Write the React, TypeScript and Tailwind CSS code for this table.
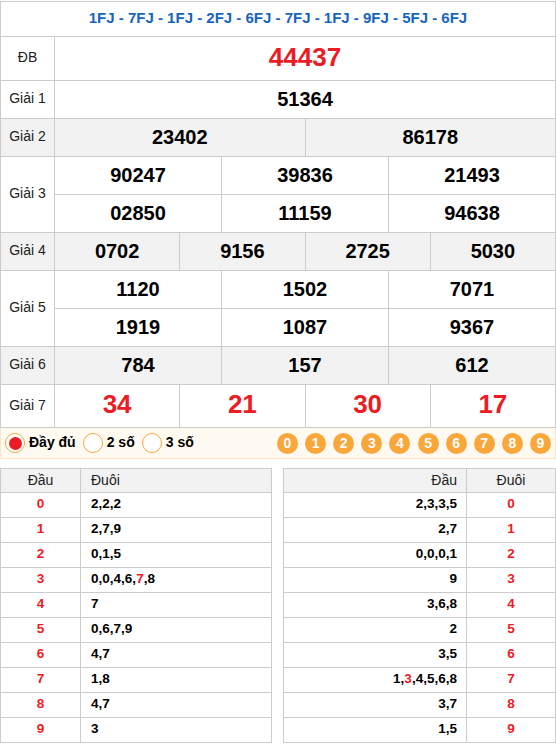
import React from "react";

const red = "text-[#ed1c24]";

const Label = ({ text, gray }: { text: string; gray?: boolean }) => (
  <div
    className={`w-[54px] shrink-0 border-r border-[#ccc] flex items-center justify-center pb-[2px] text-[14px] text-[#222] ${
      gray ? "bg-[#f2f2f2]" : ""
    }`}
  >
    {text}
  </div>
);

const Cells = ({ nums, border }: { nums: string[]; border?: boolean }) => (
  <div className={`flex ${border ? "border-b border-[#ccc]" : ""}`}>
    {nums.map((n, i) => (
      <div
        key={i}
        className={`flex-1 h-[37px] flex items-center justify-center pb-[2px] font-bold text-[20px] text-black ${
          i > 0 ? "border-l border-[#ccc]" : ""
        }`}
      >
        {n}
      </div>
    ))}
  </div>
);

const Row = ({ label, rows, gray }: { label: string; rows: string[][]; gray?: boolean }) => (
  <div className={`flex border-b border-[#ccc] ${gray ? "bg-[#f2f2f2]" : ""}`}>
    <Label text={label} gray={gray} />
    <div className="flex-1 flex flex-col">
      {rows.map((r, i) => (
        <Cells key={i} nums={r} border={i < rows.length - 1} />
      ))}
    </div>
  </div>
);

const dau = [
  ["0", "2,2,2"],
  ["1", "2,7,9"],
  ["2", "0,1,5"],
  ["3", "0,0,4,6,*7,8"],
  ["4", "7"],
  ["5", "0,6,7,9"],
  ["6", "4,7"],
  ["7", "1,8"],
  ["8", "4,7"],
  ["9", "3"],
];

const duoi = [
  ["2,3,3,5", "0"],
  ["2,7", "1"],
  ["0,0,0,1", "2"],
  ["9", "3"],
  ["3,6,8", "4"],
  ["2", "5"],
  ["3,5", "6"],
  ["1,*3,4,5,6,8", "7"],
  ["3,7", "8"],
  ["1,5", "9"],
];

// "*" marks a digit shown in red
const Loto = ({ s }: { s: string }) => (
  <>
    {s.split(",").map((p, i) => (
      <React.Fragment key={i}>
        {i > 0 && ","}
        {p.startsWith("*") ? <span className={red}>{p.slice(1)}</span> : p}
      </React.Fragment>
    ))}
  </>
);

const Radio = ({ checked, text }: { checked?: boolean; text: string }) => (
  <div className="flex items-center gap-[4px]">
    <div className="w-[20px] h-[20px] rounded-full border border-[#f9a63a] bg-white flex items-center justify-center">
      {checked && <div className="w-[13px] h-[13px] rounded-full bg-[#ed1c24]" />}
    </div>
    <span className="font-bold text-[14px] text-black pb-px">{text}</span>
  </div>
);

export default function App() {
  return (
    <div className="w-[556px] bg-white font-['Liberation_Sans',Arial,sans-serif]">
      <div className="mt-px border border-[#ccc]">
        <div className="h-[35px] border-b border-[#ccc] flex items-center justify-center pb-px font-bold text-[15px] text-[#1565c0]">
          1FJ - 7FJ - 1FJ - 2FJ - 6FJ - 7FJ - 1FJ - 9FJ - 5FJ - 6FJ
        </div>
        <div className="flex border-b border-[#ccc]">
          <Label text="ĐB" />
          <div className={`flex-1 h-[43px] flex items-center justify-center pb-[2px] font-bold text-[26px] ${red}`}>
            44437
          </div>
        </div>
        <Row label="Giải 1" rows={[["51364"]]} />
        <Row label="Giải 2" gray rows={[["23402", "86178"]]} />
        <Row
          label="Giải 3"
          rows={[
            ["90247", "39836", "21493"],
            ["02850", "11159", "94638"],
          ]}
        />
        <Row label="Giải 4" gray rows={[["0702", "9156", "2725", "5030"]]} />
        <Row
          label="Giải 5"
          rows={[
            ["1120", "1502", "7071"],
            ["1919", "1087", "9367"],
          ]}
        />
        <Row label="Giải 6" gray rows={[["784", "157", "612"]]} />
        <div className="flex">
          <Label text="Giải 7" />
          <div className="flex-1 flex">
            {["34", "21", "30", "17"].map((n, i) => (
              <div
                key={n}
                className={`flex-1 h-[42px] flex items-center justify-center pb-[3px] font-bold text-[26px] ${red} ${
                  i > 0 ? "border-l border-[#ccc]" : ""
                }`}
              >
                {n}
              </div>
            ))}
          </div>
        </div>
      </div>

      <div className="h-[31px] bg-[#fffaf1] border-x border-b border-[#fde5c6] flex items-center px-[4px]">
        <div className="flex items-center gap-[7px]">
          <Radio checked text="Đầy đủ" />
          <Radio text="2 số" />
          <Radio text="3 số" />
        </div>
        <div className="ml-auto w-[274px] flex justify-between">
          {["0", "1", "2", "3", "4", "5", "6", "7", "8", "9"].map((d) => (
            <div
              key={d}
              className="w-[21px] h-[21px] rounded-full bg-[#f9a63a] flex items-center justify-center text-white font-bold text-[14px]"
            >
              {d}
            </div>
          ))}
        </div>
      </div>

      <div className="mt-[9px] flex justify-between">
        <div className="w-[272px] border border-[#ccc] border-b-0">
          <div className="flex h-[24px] border-b border-[#ccc] bg-[#f2f2f2] text-[14px] text-[#222]">
            <div className="w-[80px] border-r border-[#ccc] flex items-center justify-center pb-px">Đầu</div>
            <div className="flex-1 flex items-center pl-[10px] pb-px">Đuôi</div>
          </div>
          {dau.map(([a, b]) => (
            <div key={a} className="flex h-[25px] border-b border-[#ccc] font-bold text-[13.5px]">
              <div className={`w-[80px] border-r border-[#ccc] flex items-center justify-center pb-px ${red}`}>{a}</div>
              <div className="flex-1 flex items-center pl-[10px] pb-px text-black">
                <Loto s={b} />
              </div>
            </div>
          ))}
        </div>
        <div className="w-[273px] border border-[#ccc] border-b-0">
          <div className="flex h-[24px] border-b border-[#ccc] bg-[#f2f2f2] text-[14px] text-[#222]">
            <div className="w-[183px] border-r border-[#ccc] flex items-center justify-end pr-[9px] pb-px">Đầu</div>
            <div className="flex-1 flex items-center justify-center pb-px">Đuôi</div>
          </div>
          {duoi.map(([a, b]) => (
            <div key={b} className="flex h-[25px] border-b border-[#ccc] font-bold text-[13.5px]">
              <div className="w-[183px] border-r border-[#ccc] flex items-center justify-end pr-[9px] pb-px text-black">
                <Loto s={a} />
              </div>
              <div className={`flex-1 flex items-center justify-center pb-px ${red}`}>{b}</div>
            </div>
          ))}
        </div>
      </div>
    </div>
  );
}
